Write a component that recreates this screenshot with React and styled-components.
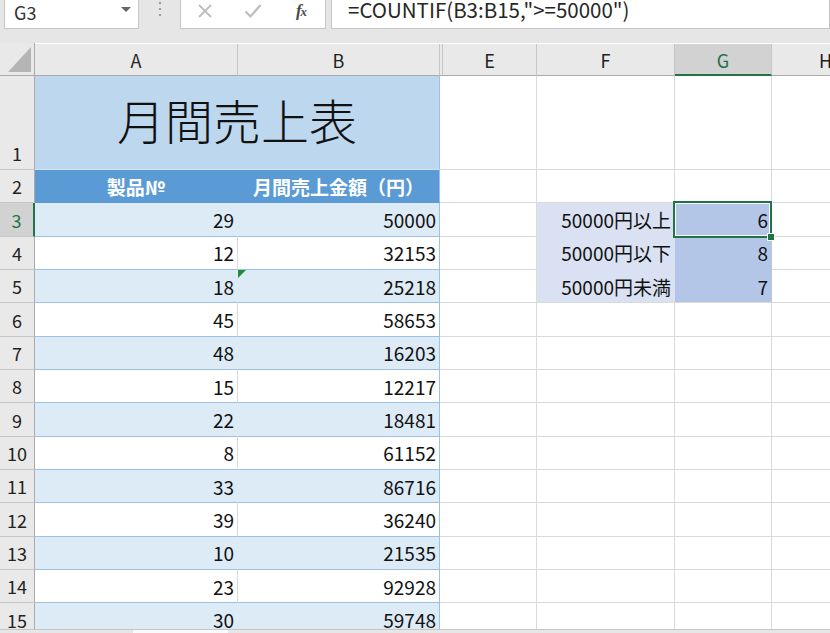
import React from 'react';
import styled, { createGlobalStyle } from 'styled-components';

const GRID = '#dadada';
const HEAD_LINE = '#c6c6c6';
const GREEN = '#217346';
const TABLE_LINE = '#9bc2e6';
const BAND = '#ddebf7';

const GlobalStyle = createGlobalStyle`
  html, body {
    margin: 0;
    padding: 0;
    background: #e6e6e6;
    overflow: hidden;
  }
  body {
    font-family: "Noto Sans CJK JP", "Noto Sans", sans-serif;
  }
`;

const Page = styled.div`
  width: 830px;
  height: 633px;
  display: flex;
  flex-direction: column;
  overflow: hidden;
  background: #e6e6e6;
`;

// formula bar
const FormulaBar = styled.div`
  height: 43px;
  flex: none;
  display: flex;
  align-items: flex-start;
  padding-left: 4px;
  box-sizing: border-box;
`;
const Box = styled.div`
  height: 29px;
  box-sizing: border-box;
  background: #fff;
  border: 1px solid ${HEAD_LINE};
  border-top: none;
  display: flex;
`;
const NameBox = styled(Box)`
  width: 135px;
  align-items: center;
  justify-content: space-between;
  padding: 0 7px 4px 9px;
  font-size: 18px;
  color: #333;
`;
const Caret = styled.span`
  width: 0;
  height: 0;
  border-left: 5px solid transparent;
  border-right: 5px solid transparent;
  border-top: 5px solid #666;
  margin-bottom: 6px;
`;
const Grip = styled.div`
  width: 41px;
  display: flex;
  flex-direction: column;
  align-items: center;
  gap: 4px;
  padding-top: 2px;
`;
const Dot = styled.span`
  width: 2px;
  height: 2px;
  background: #9a9a9a;
`;
const EditButtons = styled(Box)`
  width: 146px;
  padding-bottom: 6px;
  align-items: center;
`;
const IconSlot = styled.div`
  width: 48px;
  display: flex;
  justify-content: center;
  align-items: center;
`;
const Fx = styled.span`
  font-family: "Liberation Serif", serif;
  font-style: italic;
  font-weight: 700;
  font-size: 17px;
  color: #4a4a4a;
  letter-spacing: -1px;
  & small {
    font-size: 13px;
  }
`;
const FormulaInput = styled(Box)`
  flex: 1;
  margin-left: 5px;
  padding-left: 16px;
  font-size: 20.5px;
  line-height: 18px;
  color: #262626;
  white-space: nowrap;
`;

// sheet
const Sheet = styled.div`
  flex: 1;
  display: grid;
  grid-template-columns: 35px 203px 202px 3px 94px 138px 97px 108px;
  grid-template-rows: 33px 94px repeat(14, 33.333px);
  background: #fff;
  overflow: hidden;
  min-height: 0;
`;
const Corner = styled.div`
  background: #e9e9e9;
  border-right: 1px solid #ababab;
  border-bottom: 1px solid #ababab;
  display: flex;
  align-items: flex-end;
  justify-content: flex-end;
  padding: 0 3px 3px 0;
  box-sizing: border-box;
`;
const ColHead = styled.div`
  box-sizing: border-box;
  background: ${({ $active }) => ($active ? '#d2d2d2' : '#e9e9e9')};
  color: ${({ $active }) => ($active ? GREEN : '#222')};
  border-right: 1px solid ${HEAD_LINE};
  border-bottom: ${({ $active }) => ($active ? `2px solid ${GREEN}` : '1px solid #ababab')};
  display: flex;
  align-items: center;
  justify-content: center;
  font-size: 18px;
  padding-top: ${({ $active }) => ($active ? '1px' : '0')};
  margin-top: 1px;
`;
const RowHead = styled.div`
  box-sizing: border-box;
  background: ${({ $active }) => ($active ? '#d2d2d2' : '#e9e9e9')};
  color: ${({ $active }) => ($active ? GREEN : '#222')};
  border-bottom: 1px solid ${HEAD_LINE};
  border-right: ${({ $active }) => ($active ? `2px solid ${GREEN}` : '1px solid #ababab')};
  display: flex;
  align-items: flex-end;
  justify-content: center;
  padding-bottom: 4px;
  font-size: 18px;
  line-height: 24px;
`;
const Cell = styled.div`
  box-sizing: border-box;
  position: relative;
  display: flex;
  align-items: center;
  justify-content: ${({ $align }) => ($align === 'center' ? 'center' : 'flex-end')};
  padding: 0 3px;
  white-space: nowrap;
  font-size: 19px;
  color: #111;
  background: ${({ $bg }) => $bg || '#fff'};
  border-right: 1px solid ${({ $right }) => $right || GRID};
  border-bottom: 1px solid ${({ $bottom }) => $bottom || GRID};
`;
const TitleCell = styled(Cell)`
  grid-column: span 2;
  justify-content: center;
  padding-bottom: 8px;
  font-size: 48px;
  font-weight: 300;
  color: #111;
`;
const TableHead = styled(Cell)`
  justify-content: center;
  font-weight: 700;
  color: #fff;
`;
const Selection = styled.div`
  position: absolute;
  top: -2px;
  left: -2px;
  right: -1px;
  bottom: -2px;
  border: 2px solid ${GREEN};
  box-shadow: inset 0 0 0 1px #fff;
  z-index: 2;
`;
const FillHandle = styled.span`
  position: absolute;
  right: -5px;
  bottom: -5px;
  width: 6px;
  height: 6px;
  background: ${GREEN};
  border: 1px solid #fff;
`;
const ErrorMark = styled.span`
  position: absolute;
  top: 0;
  left: 0;
  width: 0;
  height: 0;
  border-top: 8px solid #1e8c3a;
  border-right: 8px solid transparent;
`;
const BottomBar = styled.div`
  height: 3px;
  flex: none;
  border-top: 1px solid #c6c6c6;
  padding-left: 133px;
  background: #e6e6e6;
`;
const ScrollThumb = styled.div`
  width: 95px;
  height: 100%;
  background: #fafafa;
`;
const Gap = styled.div`
  border-bottom: 1px solid ${GRID};
  box-sizing: border-box;
`;
const HeadGap = styled.div`
  background: #e9e9e9;
  border-right: 1px solid ${HEAD_LINE};
  border-bottom: 1px solid #ababab;
  box-sizing: border-box;
  margin-top: 1px;
`;

const sales = [
  [29, 50000], [12, 32153], [18, 25218], [45, 58653], [48, 16203],
  [15, 12217], [22, 18481], [8, 61152], [33, 86716], [39, 36240],
  [10, 21535], [23, 92928], [30, 59748],
];
const summary = {
  3: ['50000円以上', 6],
  4: ['50000円以下', 8],
  5: ['50000円未満', 7],
};

const columns = ['A', 'B', '', 'E', 'F', 'G', 'H'];

const XIcon = () => (
  <svg width="16" height="16" viewBox="0 0 16 16">
    <path d="M2 2 L14 14 M14 2 L2 14" stroke="#bdbdbd" strokeWidth="1.8" fill="none" />
  </svg>
);
const CheckIcon = () => (
  <svg width="18" height="16" viewBox="0 0 18 16">
    <path d="M1.5 8.5 L6.5 13.5 L16.5 2" stroke="#bdbdbd" strokeWidth="2.2" fill="none" />
  </svg>
);
const CornerMark = () => (
  <svg width="23" height="25" viewBox="0 0 23 25">
    <path d="M0 25 L23 0 L23 25 Z" fill="#b5b5b5" />
  </svg>
);

const SideCells = ( { row } ) => {
  const item = summary[row];
  const nextFilled = !!summary[row + 1];
  return (
    <>
      <Cell $bottom={ GRID } />
      <Cell
        $bg={ item && '#d9e1f2' }
        $right={ item && '#d9e1f2' }
        $bottom={ item && nextFilled ? '#d9e1f2' : GRID }
      >
        {item && item[0]}
      </Cell>
      <Cell
        $bg={ item && '#b4c6e7' }
        $right={ item ? '#b4c6e7' : GRID }
        $bottom={ item && nextFilled ? '#b4c6e7' : GRID }
      >
        {item && item[1]}
        {row === 3 && (
          <Selection>
            <FillHandle />
          </Selection>
        )}
      </Cell>
      <Cell />
    </>
  );
};

export default function App () {
  return (
    <Page>
      <GlobalStyle />
      <FormulaBar>
        <NameBox>
          G3
          <Caret />
        </NameBox>
        <Grip>
          <Dot />
          <Dot />
          <Dot />
        </Grip>
        <EditButtons>
          <IconSlot><XIcon /></IconSlot>
          <IconSlot><CheckIcon /></IconSlot>
          <IconSlot><Fx>f<small>x</small></Fx></IconSlot>
        </EditButtons>
        <FormulaInput>=COUNTIF(B3:B15,"&gt;=50000")</FormulaInput>
      </FormulaBar>

      <Sheet>
        <Corner><CornerMark /></Corner>
        {columns.map( ( col, i ) => (col === ''
          ? <HeadGap key={ i } />
          : <ColHead key={ i } $active={ col === 'G' }>{col}</ColHead>) )}

        <RowHead>1</RowHead>
        <TitleCell $bg="#bdd7ee" $right={ TABLE_LINE } $bottom="#d3e3f3">月間売上表</TitleCell>
        <Gap />
        <SideCells row={ 1 } />

        <RowHead>2</RowHead>
        <TableHead $bg="#5b9bd5" $right="#5b9bd5" $bottom="#5b9bd5">製品№</TableHead>
        <TableHead $bg="#5b9bd5" $right={ TABLE_LINE } $bottom="#5b9bd5">月間売上金額（円）</TableHead>
        <Gap />
        <SideCells row={ 2 } />

        {sales.map( ( [ no, amount ], i ) => {
          const row = i + 3;
          const banded = i % 2 === 0;
          const bg = banded ? BAND : '#fff';
          return (
            <React.Fragment key={ row }>
              <RowHead $active={ row === 3 }>{row}</RowHead>
              <Cell $bg={ bg } $right={ banded ? BAND : GRID } $bottom={ TABLE_LINE }>{no}</Cell>
              <Cell $bg={ bg } $right={ TABLE_LINE } $bottom={ TABLE_LINE }>
                {row === 5 && <ErrorMark />}
                {amount}
              </Cell>
              <Gap />
              <SideCells row={ row } />
            </React.Fragment>
          );
        } )}
      </Sheet>
      <BottomBar>
        <ScrollThumb />
      </BottomBar>
    </Page>
  );
}
